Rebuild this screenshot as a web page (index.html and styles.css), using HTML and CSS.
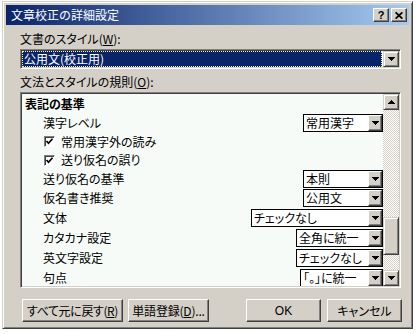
FILE: index.html
```html
<!DOCTYPE html>
<html lang="ja">
<head>
  <meta charset="UTF-8" />
  <title>文章校正の詳細設定</title>
  <link rel="stylesheet" href="styles.css">
</head>
<body>
  <div class="dialog">
    <div class="titlebar">
      <span class="title">文章校正の詳細設定</span>
      <div class="caption-buttons">
        <span class="cap-btn help">?</span>
        <span class="cap-btn">
          <svg width="8" height="7" viewBox="0 0 8 7"><path d="M0.6 0.3 L7.4 6.7 M7.4 0.3 L0.6 6.7" stroke="#000" stroke-width="1.7" fill="none"/></svg>
        </span>
      </div>
    </div>

    <div class="content">
      <div class="label">文書のスタイル(<u>W</u>):</div>
      <div class="combo">
        <div class="combo-value">公用文(校正用)</div>
        <span class="sb-btn">
          <svg class="arrow" width="7" height="4" viewBox="0 0 7 4" shape-rendering="crispEdges"><path d="M0 0H7V1H6V2H5V3H4V4H3V3H2V2H1V1H0Z"/></svg>
        </span>
      </div>

      <div class="label second">文法とスタイルの規則(<u>O</u>):</div>
      <div class="listbox">
        <div class="rows">
          <div class="row head">表記の基準</div>
          <div class="row">
            <span>漢字レベル</span>
            <span class="dd w80"><span class="dd-text">常用漢字</span><span class="dd-btn"><svg class="arrow" width="7" height="4" viewBox="0 0 7 4" shape-rendering="crispEdges"><path d="M0 0H7V1H6V2H5V3H4V4H3V3H2V2H1V1H0Z"/></svg></span></span>
          </div>
          <div class="row check">
            <span class="box"><svg width="9" height="9" viewBox="0 0 9 9"><path d="M1.5 4 L3.5 6.2 L7.5 1.8" stroke="#000" stroke-width="1.7" fill="none"/></svg></span>
            <span>常用漢字外の読み</span>
          </div>
          <div class="row check h18">
            <span class="box"><svg width="9" height="9" viewBox="0 0 9 9"><path d="M1.5 4 L3.5 6.2 L7.5 1.8" stroke="#000" stroke-width="1.7" fill="none"/></svg></span>
            <span>送り仮名の誤り</span>
          </div>
          <div class="row">
            <span>送り仮名の基準</span>
            <span class="dd w80"><span class="dd-text">本則</span><span class="dd-btn"><svg class="arrow" width="7" height="4" viewBox="0 0 7 4" shape-rendering="crispEdges"><path d="M0 0H7V1H6V2H5V3H4V4H3V3H2V2H1V1H0Z"/></svg></span></span>
          </div>
          <div class="row">
            <span>仮名書き推奨</span>
            <span class="dd w80"><span class="dd-text">公用文</span><span class="dd-btn"><svg class="arrow" width="7" height="4" viewBox="0 0 7 4" shape-rendering="crispEdges"><path d="M0 0H7V1H6V2H5V3H4V4H3V3H2V2H1V1H0Z"/></svg></span></span>
          </div>
          <div class="row h21">
            <span>文体</span>
            <span class="dd w132"><span class="dd-text">チェックなし</span><span class="dd-btn"><svg class="arrow" width="7" height="4" viewBox="0 0 7 4" shape-rendering="crispEdges"><path d="M0 0H7V1H6V2H5V3H4V4H3V3H2V2H1V1H0Z"/></svg></span></span>
          </div>
          <div class="row h20">
            <span>カタカナ設定</span>
            <span class="dd w87"><span class="dd-text">全角に統一</span><span class="dd-btn"><svg class="arrow" width="7" height="4" viewBox="0 0 7 4" shape-rendering="crispEdges"><path d="M0 0H7V1H6V2H5V3H4V4H3V3H2V2H1V1H0Z"/></svg></span></span>
          </div>
          <div class="row h20">
            <span>英文字設定</span>
            <span class="dd w87"><span class="dd-text">チェックなし</span><span class="dd-btn"><svg class="arrow" width="7" height="4" viewBox="0 0 7 4" shape-rendering="crispEdges"><path d="M0 0H7V1H6V2H5V3H4V4H3V3H2V2H1V1H0Z"/></svg></span></span>
          </div>
          <div class="row h20">
            <span>句点</span>
            <span class="dd w83"><span class="dd-text">「。」に統一</span><span class="dd-btn"><svg class="arrow" width="7" height="4" viewBox="0 0 7 4" shape-rendering="crispEdges"><path d="M0 0H7V1H6V2H5V3H4V4H3V3H2V2H1V1H0Z"/></svg></span></span>
          </div>
        </div>

        <div class="scrollbar">
          <span class="sb-btn"><svg class="arrow up" width="7" height="4" viewBox="0 0 7 4" shape-rendering="crispEdges"><path d="M0 0H7V1H6V2H5V3H4V4H3V3H2V2H1V1H0Z"/></svg></span>
          <span class="track-top"></span>
          <span class="thumb"></span>
          <span class="track-rest"></span>
          <span class="sb-btn"><svg class="arrow" width="7" height="4" viewBox="0 0 7 4" shape-rendering="crispEdges"><path d="M0 0H7V1H6V2H5V3H4V4H3V3H2V2H1V1H0Z"/></svg></span>
        </div>
      </div>

      <div class="footer">
        <span class="btn reset">すべて元に戻す(<u>R</u>)</span>
        <span class="btn register">単語登録(<u>D</u>)...</span>
        <span class="btn ok">OK</span>
        <span class="btn cancel">キャンセル</span>
      </div>
    </div>
  </div>
</body>
</html>
```

FILE: styles.css
```css
body {
  margin: 0;
  background: #fff;
  font-family: "Noto Sans CJK JP", sans-serif;
  font-size: 12px;
  font-feature-settings: "palt";
  color: #000;
}

.dialog {
  margin: 1px 0 0 2px;
  width: 411px;
  height: 328px;
  box-sizing: border-box;
  background: #d4d0c8;
  border: 1px solid;
  border-color: #d4d0c8 #404040 #404040 #d4d0c8;
  box-shadow: inset 1px 1px #fff, inset -1px -1px #808080;
  padding: 3px;
  display: flex;
  flex-direction: column;
}

.titlebar {
  height: 20px;
  flex: none;
  background: linear-gradient(to right, #0a246a, #a6caf0);
  display: flex;
  align-items: center;
  justify-content: space-between;
  padding: 0 2px 0 5px;
  color: #fff;
}

.title {
  line-height: 14px;
  font-feature-settings: normal;
}

.caption-buttons {
  display: flex;
  gap: 2px;
}

.cap-btn {
  width: 16px;
  height: 14px;
  box-sizing: border-box;
  background: #d4d0c8;
  border: 1px solid;
  border-color: #fff #404040 #404040 #fff;
  box-shadow: inset -1px -1px #808080;
  display: flex;
  align-items: center;
  justify-content: center;
  color: #000;
}

.help {
  font-family: "Liberation Sans", sans-serif;
  font-weight: bold;
  font-size: 11px;
  line-height: 11px;
}

.content {
  flex: 1;
  display: flex;
  flex-direction: column;
  padding: 6px 8px 0 14px;
}

.label {
  height: 15px;
  line-height: 15px;
}

.label.second {
  margin-top: 5px;
}

u {
  text-decoration: underline;
  text-underline-offset: 1px;
}

.combo {
  margin-top: 3px;
  height: 20px;
  box-sizing: border-box;
  background: #fff;
  border: 1px solid;
  border-color: #808080 #fff #fff #808080;
  box-shadow: inset 1px 1px #404040, inset -1px -1px #d4d0c8;
  padding: 1px;
  display: flex;
}

.combo-value {
  flex: 1;
  margin-right: 1px;
  box-sizing: border-box;
  background: #0a246a;
  color: #fff;
  border: 1px dotted #f4f0b0;
  line-height: 14px;
  padding-left: 1px;
}

.listbox {
  margin-top: 3px;
  height: 196px;
  box-sizing: border-box;
  background: #f7fbf7;
  border: 1px solid;
  border-color: #808080 #fff #fff #808080;
  box-shadow: inset 1px 1px #404040, inset -1px -1px #d4d0c8;
  padding: 1px;
  display: flex;
}

.rows {
  flex: 1;
  overflow: hidden;
}

.row {
  height: 19px;
  display: flex;
  align-items: center;
  justify-content: space-between;
  padding-left: 21px;
  white-space: nowrap;
  line-height: 14px;
}

.row.h18 { height: 18px; }
.row.h20 { height: 20px; }
.row.h21 { height: 21px; }

.row.head {
  padding-left: 3px;
  font-weight: bold;
}

.row.check {
  justify-content: flex-start;
  padding-left: 22px;
  gap: 6px;
}

.box {
  width: 11px;
  height: 11px;
  box-sizing: border-box;
  background: #fff;
  border: 1px solid;
  border-color: #808080 #fff #fff #808080;
  box-shadow: inset 1px 1px #404040;
  display: flex;
  align-items: center;
  justify-content: center;
}

.dd {
  height: 18px;
  box-sizing: border-box;
  border: 1px solid #000;
  background: #fff;
  display: flex;
}

.dd.w80 { width: 80px; }
.dd.w83 { width: 83px; }
.dd.w87 { width: 87px; }
.dd.w132 { width: 132px; }

.dd-text {
  flex: 1;
  overflow: hidden;
  padding-left: 2px;
  line-height: 16px;
}

.dd-btn {
  width: 14px;
  height: 16px;
  flex: none;
  box-sizing: border-box;
  background: #d4d0c8;
  border: 1px solid;
  border-color: #fff #404040 #404040 #fff;
  box-shadow: inset -1px -1px #808080;
  display: flex;
  align-items: center;
  justify-content: center;
}

.arrow {
  display: block;
}

.arrow.up {
  transform: rotate(180deg);
}

.scrollbar {
  width: 16px;
  display: flex;
  flex-direction: column;
  background-color: #fff;
  background-image: repeating-conic-gradient(#d4d0c8 0 25%, #fff 0 50%);
  background-size: 2px 2px;
}

.sb-btn {
  width: 16px;
  height: 16px;
  flex: none;
  box-sizing: border-box;
  background: #d4d0c8;
  border: 1px solid;
  border-color: #d4d0c8 #404040 #404040 #d4d0c8;
  box-shadow: inset 1px 1px #fff, inset -1px -1px #808080;
  display: flex;
  align-items: center;
  justify-content: center;
}

.track-top {
  height: 107px;
  flex: none;
}

.thumb {
  height: 38px;
  flex: none;
  box-sizing: border-box;
  background: #d4d0c8;
  border: 1px solid;
  border-color: #d4d0c8 #404040 #404040 #d4d0c8;
  box-shadow: inset 1px 1px #fff, inset -1px -1px #808080;
}

.track-rest {
  flex: 1;
}

.footer {
  margin-top: 11px;
  margin-right: -1px;
  padding-left: 2px;
  display: flex;
}

.btn {
  height: 23px;
  box-sizing: border-box;
  background: #d4d0c8;
  border: 1px solid;
  border-color: #fff #404040 #404040 #fff;
  box-shadow: inset -1px -1px #808080;
  display: flex;
  align-items: center;
  justify-content: center;
  line-height: 14px;
  white-space: nowrap;
}

.btn.reset { width: 101px; letter-spacing: -0.4px; }
.btn.register { width: 81px; margin-left: 5px; letter-spacing: -0.2px; }
.btn.ok { width: 75px; margin-left: auto; font-family: "Liberation Sans", sans-serif; }
.btn.cancel { width: 75px; margin-left: 6px; }
```
